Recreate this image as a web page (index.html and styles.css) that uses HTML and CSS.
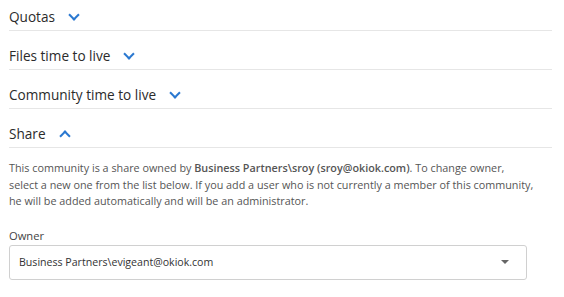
FILE: index.html
```html
<!DOCTYPE html>
<html lang="en">
<head>
    <meta charset="UTF-8">
    <title>Community settings</title>
    <link rel="stylesheet" href="styles.css">
</head>
<body>
    <div class="panel">
        <div class="section">
            <h3 class="section-title">Quotas <span class="chevron down"></span></h3>
        </div>
        <div class="section">
            <h3 class="section-title">Files time to live <span class="chevron down"></span></h3>
        </div>
        <div class="section">
            <h3 class="section-title">Community time to live <span class="chevron down"></span></h3>
        </div>
        <div class="section">
            <h3 class="section-title">Share <span class="chevron up"></span></h3>
        </div>

        <div class="share-body">
            <p class="share-info">This community is a share owned by <strong>Business Partners\sroy (sroy@okiok.com)</strong>. To change owner,<br>
            select a new one from the list below. If you add a user who is not currently a member of this community,<br>
            he will be added automatically and will be an administrator.</p>

            <label class="field-label">Owner</label>
            <div class="select">
                <span class="select-value">Business Partners\evigeant@okiok.com</span>
                <span class="caret"></span>
            </div>
        </div>
    </div>
</body>
</html>
```

FILE: styles.css
```css
body {
    margin: 0;
    padding: 0 12px 0 9px;
    background: #ffffff;
    font-family: "Open Sans", "Noto Sans", sans-serif;
    color: #333333;
}

.panel {
    width: 543px;
}

.section {
    border-bottom: 1px solid #e6e6e6;
    padding: 17px 0 6px;
}

.section:first-child {
    padding-top: 9px;
}

.section-title {
    margin: 0;
    font-size: 13.6px;
    font-weight: 400;
    line-height: 15px;
    color: #2b2b2b;
    display: flex;
    align-items: center;
}

.chevron {
    display: inline-block;
    width: 6px;
    height: 6px;
    border-right: 2.4px solid #2a78d0;
    border-bottom: 2.4px solid #2a78d0;
    margin-left: 15px;
}

.chevron.down {
    transform: rotate(45deg);
    margin-top: -4px;
}

.chevron.up {
    transform: rotate(-135deg);
    margin-top: 4px;
}

.share-body {
    padding-top: 12px;
}

.share-info {
    margin: 0;
    font-size: 10.8px;
    line-height: 16.5px;
    color: #555555;
    white-space: nowrap;
}

.share-info strong {
    font-weight: 600;
    color: #555555;
}

.field-label {
    display: block;
    margin-top: 18px;
    font-size: 11.2px;
    line-height: 16px;
    color: #444444;
}

.select {
    width: 518px;
    height: 35px;
    margin-top: 1px;
    box-sizing: border-box;
    border: 1px solid #d0d0d0;
    border-radius: 3px;
    padding: 0 9px;
    display: flex;
    align-items: center;
    justify-content: space-between;
    font-size: 10.6px;
    color: #333333;
}

.caret {
    width: 0;
    height: 0;
    border-left: 4.5px solid transparent;
    border-right: 4.5px solid transparent;
    border-top: 4.5px solid #666666;
    margin-right: 8px;
}
```
